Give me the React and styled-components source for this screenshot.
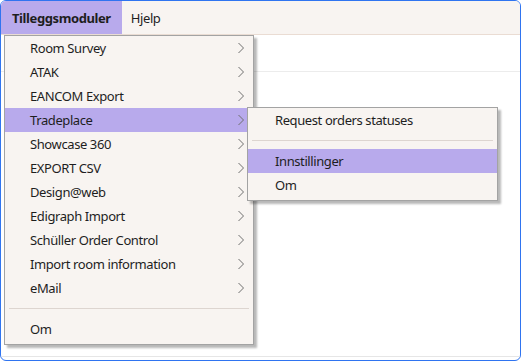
import React from 'react';
import styled, { createGlobalStyle } from 'styled-components';

const GlobalStyle = createGlobalStyle`
  html, body { margin: 0; padding: 0; background: #ffffff; }
  body { font-family: "Noto Sans", "Open Sans", sans-serif; color: #1e1e1e; letter-spacing: -0.4px; }
`;

const Window = styled.div`
  position: relative;
  width: 521px;
  height: 361px;
  box-sizing: border-box;
  border: 1px solid #2f74f0;
  border-radius: 6px;
  overflow: hidden;
  background: #ffffff;
  display: flex;
  flex-direction: column;
`;

const MenuBar = styled.div`
  height: 33px;
  display: flex;
  align-items: stretch;
  background: #f8f4f1;
  border-bottom: 1px solid #eadcd3;
  font-size: 13px;
`;

const BarItem = styled.div`
  display: flex;
  align-items: center;
  padding: 0 ${p => (p.$active ? '11px' : '9px')};
  font-weight: ${p => (p.$active ? 700 : 400)};
  background: ${p => (p.$active ? '#b8aaec' : 'transparent')};
`;

const Toolbar = styled.div`
  height: 36px;
  border-bottom: 1px solid #ececec;
`;

const Body = styled.div`
  flex: 1;
  border-bottom: 1px solid #e6e6e6;
  margin-bottom: 3px;
`;

const Menu = styled.div`
  position: absolute;
  left: ${p => p.$left}px;
  top: ${p => p.$top}px;
  width: ${p => p.$width}px;
  box-sizing: border-box;
  padding: 0 0 3px;
  background: #f8f4f1;
  border: 1px solid #a3a3a3;
  box-shadow: 3px 3px 2px rgba(0, 0, 0, 0.28);
  font-size: 13px;
`;

const Item = styled.div`
  height: 24px;
  display: flex;
  align-items: center;
  justify-content: space-between;
  padding: 0 8px 0 ${p => p.$indent}px;
  background: ${p => (p.$active ? '#b8aaec' : 'transparent')};
`;

const Separator = styled.div`
  height: 1px;
  margin: ${p => p.$gap}px 4px;
  background: #ddd5d0;
`;

const Chevron = () => (
  <svg width="8" height="12" viewBox="0 0 8 12">
    <path d="M1.5 1 L6.5 6 L1.5 11" fill="none" stroke="#6e6e6e" strokeWidth="1" />
  </svg>
);

const items = [
  'Room Survey',
  'ATAK',
  'EANCOM Export',
  'Tradeplace',
  'Showcase 360',
  'EXPORT CSV',
  'Design@web',
  'Edigraph Import',
  'Schüller Order Control',
  'Import room information',
  'eMail',
];

const App = () => (
  <>
    <GlobalStyle />
    <Window>
      <MenuBar>
        <BarItem $active>Tilleggsmoduler</BarItem>
        <BarItem>Hjelp</BarItem>
      </MenuBar>
      <Toolbar />
      <Body />

      <Menu $left={3} $top={34} $width={250}>
        {items.map(label => (
          <Item key={label} $indent={25} $active={label === 'Tradeplace'}>
            <span>{label}</span>
            <Chevron />
          </Item>
        ))}
        <Separator $gap={8} />
        <Item $indent={25}>
          <span>Om</span>
        </Item>
      </Menu>

      <Menu $left={246} $top={106} $width={251}>
        <Item $indent={27}>
          <span>Request orders statuses</span>
        </Item>
        <Separator $gap={8} />
        <Item $indent={27} $active>
          <span>Innstillinger</span>
        </Item>
        <Item $indent={27}>
          <span>Om</span>
        </Item>
      </Menu>
    </Window>
  </>
);

export default App;
